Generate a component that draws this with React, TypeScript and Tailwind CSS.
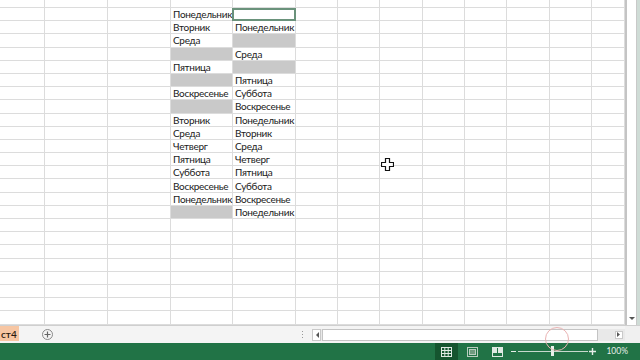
import React from 'react';

// column widths include the 1px right gridline
const COLS = [45, 63, 63, 62, 63, 42, 42, 43, 42, 42, 43, 42, 33];
const ROW_COUNT = 25;

// null = grey filled cell, 'SEL' = active cell
const COL_D: (string | null)[] = [
  'Понедельник', 'Вторник', 'Среда', null, 'Пятница', null, 'Воскресенье', null,
  'Вторник', 'Среда', 'Четверг', 'Пятница', 'Суббота', 'Воскресенье', 'Понедельник', null,
];
const COL_E: (string | null)[] = [
  'SEL', 'Понедельник', null, 'Среда', null, 'Пятница', 'Суббота', 'Воскресенье',
  'Понедельник', 'Вторник', 'Среда', 'Четверг', 'Пятница', 'Суббота', 'Воскресенье', 'Понедельник',
];

function cellValue(row: number, col: number): string | null | undefined {
  if (row < 1 || row > 16) return undefined;
  if (col === 3) return COL_D[row - 1];
  if (col === 4) return COL_E[row - 1];
  return undefined;
}

function Cell({ row, col }: { row: number; col: number }) {
  const v = cellValue(row, col);
  const grey = v === null;
  return (
    <div
      className={`relative flex items-center overflow-visible border-r border-b border-[#dcdcdc] pl-[2px] ${
        grey ? 'bg-[#c9c9c9]' : ''
      }`}
    >
      {v && v !== 'SEL' && (
        <span className="whitespace-nowrap text-[10px] leading-none tracking-[-0.3px] text-[#1a1a1a]">{v}</span>
      )}
      {v === 'SEL' && (
        <div className="absolute -left-px top-0 -right-px -bottom-px border-2 border-[#6a927b]" />
      )}
    </div>
  );
}

function Sheet() {
  const cells = [];
  for (let r = 0; r < ROW_COUNT; r++) {
    for (let c = 0; c < COLS.length; c++) {
      cells.push(<Cell key={`${r}-${c}`} row={r} col={c} />);
    }
  }
  return (
    <div className="grid h-[325px] w-[625px] grid-cols-[45px_63px_63px_62px_63px_42px_42px_43px_42px_42px_43px_42px_33px] grid-rows-[8px_repeat(24,13.2px)] overflow-hidden">
      {cells}
    </div>
  );
}

function VScroll() {
  return (
    <div className="flex h-[325px] w-[15px] border-l-2 border-[#c4c4c4] bg-[#f0f0f0]">
      <div className="flex flex-1 flex-col">
        <div className="flex-1 border-r border-[#c9c9c9] bg-white" />
        <div className="flex h-[12px] items-center justify-center border-r border-[#c9c9c9] bg-white">
          <svg width="6" height="4" viewBox="0 0 6 4">
            <path d="M0 0 L6 0 L3 3 Z" fill="#555" />
          </svg>
        </div>
      </div>
      <div className="w-[3px] bg-[#cfdcd6]" />
    </div>
  );
}

function TabBar() {
  return (
    <div className="flex h-[18px] items-center border-t border-[#cfcfcf] bg-[#f4f4f4]">
      <div className="flex h-[15px] w-[19px] items-center justify-start self-start bg-[#f7c6a3] pl-[1px] text-[10px] font-semibold leading-none text-[#2a1a10]">
        ст4
      </div>
      <div className="ml-[23px] flex h-[11px] w-[11px] items-center justify-center rounded-full border border-[#8a8a8a]">
        <svg width="7" height="7" viewBox="0 0 7 7">
          <path d="M3.5 0.5 V6.5 M0.5 3.5 H6.5" stroke="#666" strokeWidth="1.2" />
        </svg>
      </div>
      <div className="flex-1" />
      <div className="mr-[9px] flex flex-col gap-[2px]">
        <div className="h-[1px] w-[1px] bg-[#999]" />
        <div className="h-[1px] w-[1px] bg-[#999]" />
        <div className="h-[1px] w-[1px] bg-[#999]" />
      </div>
      {/* horizontal scrollbar */}
      <div className="flex h-[12px] w-[313px] items-center bg-[#e9e9e9]">
        <div className="flex h-full w-[9px] items-center justify-center border border-[#c9c9c9] bg-white">
          <svg width="4" height="6" viewBox="0 0 4 6">
            <path d="M4 0 L4 6 L1 3 Z" fill="#555" />
          </svg>
        </div>
        <div className="ml-[1px] h-full w-[276px] border border-[#c4c4c4] bg-white" />
        <div className="flex-1" />
        <div className="mr-[2px] flex h-[8px] w-[8px] items-center justify-center border border-[#c9c9c9] bg-white">
          <svg width="4" height="5" viewBox="0 0 4 5">
            <path d="M0 0 L0 5 L3 2.5 Z" fill="#555" />
          </svg>
        </div>
      </div>
      <div className="h-full w-[15px] bg-[#f0f0f0]" />
    </div>
  );
}

function StatusBar() {
  return (
    <div className="flex h-[17px] items-stretch bg-[#217346] pr-[12px]">
      <div className="flex-1" />
      <div className="flex w-[23px] items-center justify-center bg-[#15552f]">
        <svg width="11" height="10" viewBox="0 0 11 10">
          <rect x="0.5" y="0.5" width="10" height="9" fill="none" stroke="#dfe9e2" />
          <path d="M3.8 0.5 V9.5 M7.2 0.5 V9.5 M0.5 3.5 H10.5 M0.5 6.5 H10.5" stroke="#dfe9e2" />
        </svg>
      </div>
      <div className="ml-[4px] flex w-[20px] items-center justify-center">
        <svg width="11" height="10" viewBox="0 0 11 10">
          <rect x="0.5" y="0.5" width="10" height="9" fill="none" stroke="#b9cdbf" />
          <rect x="2.5" y="2.5" width="6" height="5" fill="#6f9a7f" stroke="#b9cdbf" />
        </svg>
      </div>
      <div className="ml-[5px] flex w-[20px] items-center justify-center">
        <svg width="11" height="10" viewBox="0 0 11 10">
          <rect x="0.5" y="0.5" width="10" height="9" fill="none" stroke="#dfe9e2" />
          <rect x="1" y="1" width="4" height="5" fill="#dfe9e2" />
          <rect x="6" y="1" width="4" height="5" fill="#dfe9e2" />
        </svg>
      </div>
      <div className="ml-[4px] flex w-[6px] items-center">
        <div className="h-[1px] w-[5px] bg-[#e6eee9]" />
      </div>
      <div className="relative ml-[1px] flex w-[70px] items-center">
        <div className="h-[1px] w-full bg-[#c7d8cd]" />
        <div className="absolute left-[33px] top-[3px] h-[10px] w-[3px] bg-[#e8efe9]" />
      </div>
      <div className="flex w-[8px] items-center justify-center">
        <svg width="7" height="7" viewBox="0 0 7 7">
          <path d="M3.5 0 V7 M0 3.5 H7" stroke="#e6eee9" strokeWidth="1.4" />
        </svg>
      </div>
      <div className="ml-[10px] flex items-center text-[8.5px] leading-none text-[#e6eee9]">100%</div>
    </div>
  );
}

export default function App() {
  return (
    <div className="relative h-[360px] w-[640px] overflow-hidden bg-white font-['Lato','Liberation_Sans',sans-serif]">
      <div className="flex">
        <Sheet />
        <VScroll />
      </div>
      <TabBar />
      <StatusBar />

      {/* mouse cursor over the sheet */}
      <svg className="absolute left-[381px] top-[158px]" width="13" height="13" viewBox="0 0 13 13">
        <path
          d="M4.5 0.5 H8.5 V4.5 H12.5 V8.5 H8.5 V12.5 H4.5 V8.5 H0.5 V4.5 H4.5 Z"
          fill="#fff"
          stroke="#111"
          strokeWidth="1.2"
        />
      </svg>
      {/* click highlight from screen recording */}
      <div className="absolute left-[545px] top-[327px] h-[24px] w-[24px] rounded-full border border-[#eab3b3]" />
    </div>
  );
}
